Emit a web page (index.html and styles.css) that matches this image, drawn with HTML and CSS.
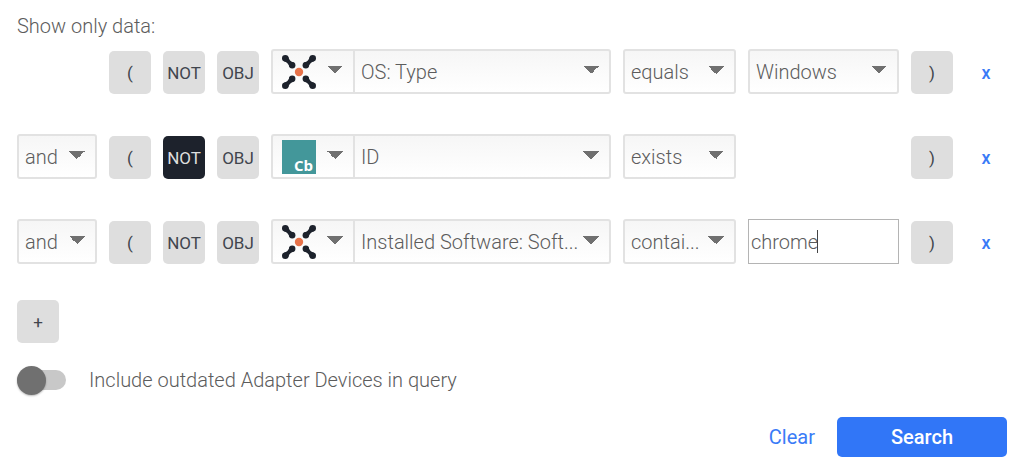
FILE: index.html
```
<!DOCTYPE html>
<html lang="en">
<head>
<meta charset="utf-8">
<meta name="viewport" content="width=device-width, initial-scale=1">
<title>Query</title>
<link rel="stylesheet" href="styles.css">
</head>
<body>
<svg class="defs" aria-hidden="true">
  <symbol id="hub" viewBox="0 0 34 34">
    <g fill="#1d222c">
      <g id="arm">
        <circle cx="3.3" cy="3.3" r="3.3"/>
        <circle cx="10.2" cy="10.2" r="3.2"/>
        <path d="M6.4 2Q7 6 12 7.6L7.6 12Q6 7 2 6.4Z"/>
      </g>
      <use href="#arm" transform="matrix(-1 0 0 1 34 0)"/>
      <use href="#arm" transform="matrix(1 0 0 -1 0 34)"/>
      <use href="#arm" transform="matrix(-1 0 0 -1 34 34)"/>
    </g>
    <circle cx="17" cy="17" r="4.2" fill="#e8734a"/>
  </symbol>
</svg>
<form class="query">
  <p class="title">Show only data:</p>
  <div class="rows">
    <div class="row">
      <span></span>
      <button type="button" class="key">(</button>
      <button type="button" class="key">NOT</button>
      <button type="button" class="key">OBJ</button>
      <div class="field">
        <button type="button" class="drop adapter" aria-haspopup="listbox" aria-label="Adapter"><svg class="logo"><use href="#hub"/></svg></button>
        <select class="drop name" aria-label="Field"><option>OS: Type</option></select>
      </div>
      <select class="drop" aria-label="Operator"><option>equals</option></select>
      <select class="drop" aria-label="Value"><option>Windows</option></select>
      <button type="button" class="key">)</button>
      <button type="button" class="remove">x</button>
    </div>
    <div class="row">
      <select class="drop" aria-label="Logic"><option>and</option></select>
      <button type="button" class="key">(</button>
      <button type="button" class="key on" aria-pressed="true">NOT</button>
      <button type="button" class="key">OBJ</button>
      <div class="field">
        <button type="button" class="drop adapter" aria-haspopup="listbox" aria-label="Adapter"><span class="logo cb">Cb</span></button>
        <select class="drop name" aria-label="Field"><option>ID</option></select>
      </div>
      <select class="drop" aria-label="Operator"><option>exists</option></select>
      <span></span>
      <button type="button" class="key">)</button>
      <button type="button" class="remove">x</button>
    </div>
    <div class="row">
      <select class="drop" aria-label="Logic"><option>and</option></select>
      <button type="button" class="key">(</button>
      <button type="button" class="key">NOT</button>
      <button type="button" class="key">OBJ</button>
      <div class="field">
        <button type="button" class="drop adapter" aria-haspopup="listbox" aria-label="Adapter"><svg class="logo"><use href="#hub"/></svg></button>
        <select class="drop name" aria-label="Field"><option>Installed Software: Soft...</option></select>
      </div>
      <select class="drop" aria-label="Operator"><option>contai...</option></select>
      <div class="entry">
        <input class="text" type="text" value="chrome" aria-label="Value">
        <span class="caret"></span>
      </div>
      <button type="button" class="key">)</button>
      <button type="button" class="remove">x</button>
    </div>
  </div>
  <button type="button" class="key add">+</button>
  <label class="outdated"><input class="switch" type="checkbox" role="switch"> Include outdated Adapter Devices in query</label>
  <div class="actions">
    <button type="button" class="clear">Clear</button>
    <button type="submit" class="search">Search</button>
  </div>
</form>
</body>
</html>
```
FILE: styles.css
```
* {
  box-sizing: border-box;
}

body {
  margin: 0;
  background: #fff;
  color: #5c5c5c;
  font: 300 20px/24px Roboto, "Liberation Sans", sans-serif;
}

button,
select,
input {
  margin: 0;
  color: inherit;
  font: inherit;
}

button {
  padding: 0;
  border: 0;
  background: none;
  cursor: pointer;
}

.defs {
  position: absolute;
  width: 0;
  height: 0;
}

.query {
  display: flex;
  flex-direction: column;
  align-items: stretch;
  padding: 14px 17px;
}

.title {
  margin: 0 0 11px;
}

.rows {
  display: grid;
  gap: 40px;
}

.row {
  display: grid;
  grid-template-columns: 80px 42px 42px 42px minmax(0, 1fr) 113px 151px 42px 42px;
  align-items: end;
  gap: 12px;
}

.key {
  height: 43px;
  width: 42px;
  border-radius: 5px;
  background: #dedede;
  color: #41454d;
  font-size: 17px;
  font-weight: 400;
}

.key.on {
  background: #1d222c;
  color: #dedede;
}

.drop {
  appearance: none;
  width: 100%;
  height: 45px;
  padding: 0 28px 0 6px;
  border: 2px solid #e2e2e2;
  border-radius: 3px;
  background:
    conic-gradient(from -45deg at 50% 100%, #707070 90deg, transparent 0) right 10px top 15px / 16px 8px no-repeat,
    linear-gradient(#f6f6f6, #fff);
}

.field {
  display: grid;
  grid-template-columns: 82px minmax(0, 1fr);
}

.adapter {
  display: flex;
  align-items: center;
  padding: 0 0 0 9px;
  border-right-width: 0;
  border-radius: 3px 0 0 3px;
}

.name {
  border-radius: 0 3px 3px 0;
}

.logo {
  width: 34px;
  height: 34px;
}

.cb {
  display: flex;
  align-items: flex-end;
  justify-content: flex-end;
  padding-right: 3px;
  background: #43979a;
  color: #fff;
  font: 700 15px/18px "Open Sans", sans-serif;
}

.entry {
  position: relative;
}

.text {
  display: block;
  width: 100%;
  height: 45px;
  padding: 0 2px;
  border: 1px solid #b4b4b4;
  border-radius: 0;
  outline: 0;
}

.caret {
  position: absolute;
  top: 11px;
  left: 69px;
  width: 1px;
  height: 23px;
  background: #444;
}

.remove {
  height: 43px;
  color: #3a7bf7;
  font-size: 18px;
  font-weight: 500;
}

.add {
  margin-top: 36px;
}

.outdated {
  display: flex;
  align-items: center;
  align-self: flex-start;
  gap: 23px;
  height: 30px;
  margin-top: 22px;
}

.switch {
  appearance: none;
  display: flex;
  align-items: center;
  width: 49px;
  height: 20px;
  border-radius: 10px;
  background: #c8c8c8;
}

.switch::before {
  content: "";
  width: 29px;
  height: 29px;
  flex: none;
  border-radius: 50%;
  background: #707070;
  box-shadow: 0 1px 2px #0004;
}

.actions {
  display: flex;
  justify-content: flex-end;
  gap: 22px;
  margin-top: 22px;
  font-weight: 400;
}

.clear {
  color: #3a7bf7;
}

.search {
  width: 170px;
  height: 40px;
  border-radius: 5px;
  background: #3176f7;
  color: #fff;
  font-weight: 500;
}
```
